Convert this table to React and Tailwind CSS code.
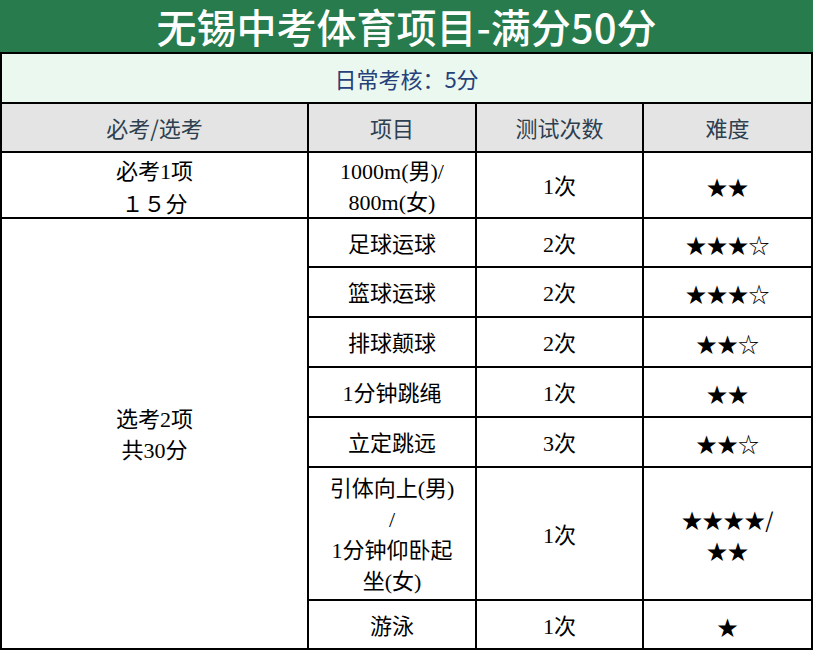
import React from 'react';

const rows = [
  { name: ['足球运球'], times: '2次', stars: ['★★★☆'] },
  { name: ['篮球运球'], times: '2次', stars: ['★★★☆'] },
  { name: ['排球颠球'], times: '2次', stars: ['★★☆'] },
  { name: ['1分钟跳绳'], times: '1次', stars: ['★★'] },
  { name: ['立定跳远'], times: '3次', stars: ['★★☆'] },
  { name: ['引体向上(男)', '/', '1分钟仰卧起', '坐(女)'], times: '1次', stars: ['★★★★/', '★★'] },
  { name: ['游泳'], times: '1次', stars: ['★'] },
];

function Cell({ children, className = '' }) {
  return (
    <div className={'flex flex-col items-center justify-center bg-white pt-[3px] text-center font-[Liberation_Serif,Noto_Sans_CJK_SC,serif] text-[22px] leading-[31px] text-black ' + className}>
      {children}
    </div>
  );
}

function Stars({ lines }) {
  return (
    <Cell>
      {lines.map((l, i) => (
        <span key={i} className="font-[Noto_Sans_CJK_SC,sans-serif] text-[21px] leading-[31px]">{l}</span>
      ))}
    </Cell>
  );
}

export default function App() {
  return (
    <div className="h-[653px] w-[813px] bg-white">
      <div className="grid grid-cols-[305px_166px_165px_167px] grid-rows-[52px_48px_47px_64px_47px_48px_48px_48px_48px_131px_47px] gap-[2px] bg-black px-[2px] pb-[2px]">
        <div className="col-span-4 -mx-[2px] flex items-center justify-center bg-[#277b4c] font-[Noto_Sans_CJK_SC,sans-serif] text-[40px] font-medium leading-none text-white">
          无锡中考体育项目-满分50分
        </div>
        <div className="col-span-4 flex items-center justify-center bg-[#eaf8ef] font-[Noto_Sans_CJK_SC,sans-serif] text-[22px] text-[#26407a]">
          日常考核：5分
        </div>
        {['必考/选考', '项目', '测试次数', '难度'].map((h) => (
          <div key={h} className="flex items-center justify-center bg-[#e4e4e4] font-[Noto_Sans_CJK_SC,sans-serif] text-[22px] text-[#2e3f50]">
            {h}
          </div>
        ))}

        <Cell>
          <span>必考1项</span>
          <span className="font-[Noto_Sans_CJK_SC,sans-serif]">１５分</span>
        </Cell>
        <Cell>
          <span>1000m(男)/</span>
          <span>800m(女)</span>
        </Cell>
        <Cell>1次</Cell>
        <Stars lines={['★★']} />

        <Cell className="row-span-7">
          <span>选考2项</span>
          <span>共30分</span>
        </Cell>
        {rows.map((r, i) => (
          <React.Fragment key={i}>
            <Cell>
              {r.name.map((n, j) => (
                <span key={j}>{n}</span>
              ))}
            </Cell>
            <Cell>{r.times}</Cell>
            <Stars lines={r.stars} />
          </React.Fragment>
        ))}
      </div>
    </div>
  );
}
